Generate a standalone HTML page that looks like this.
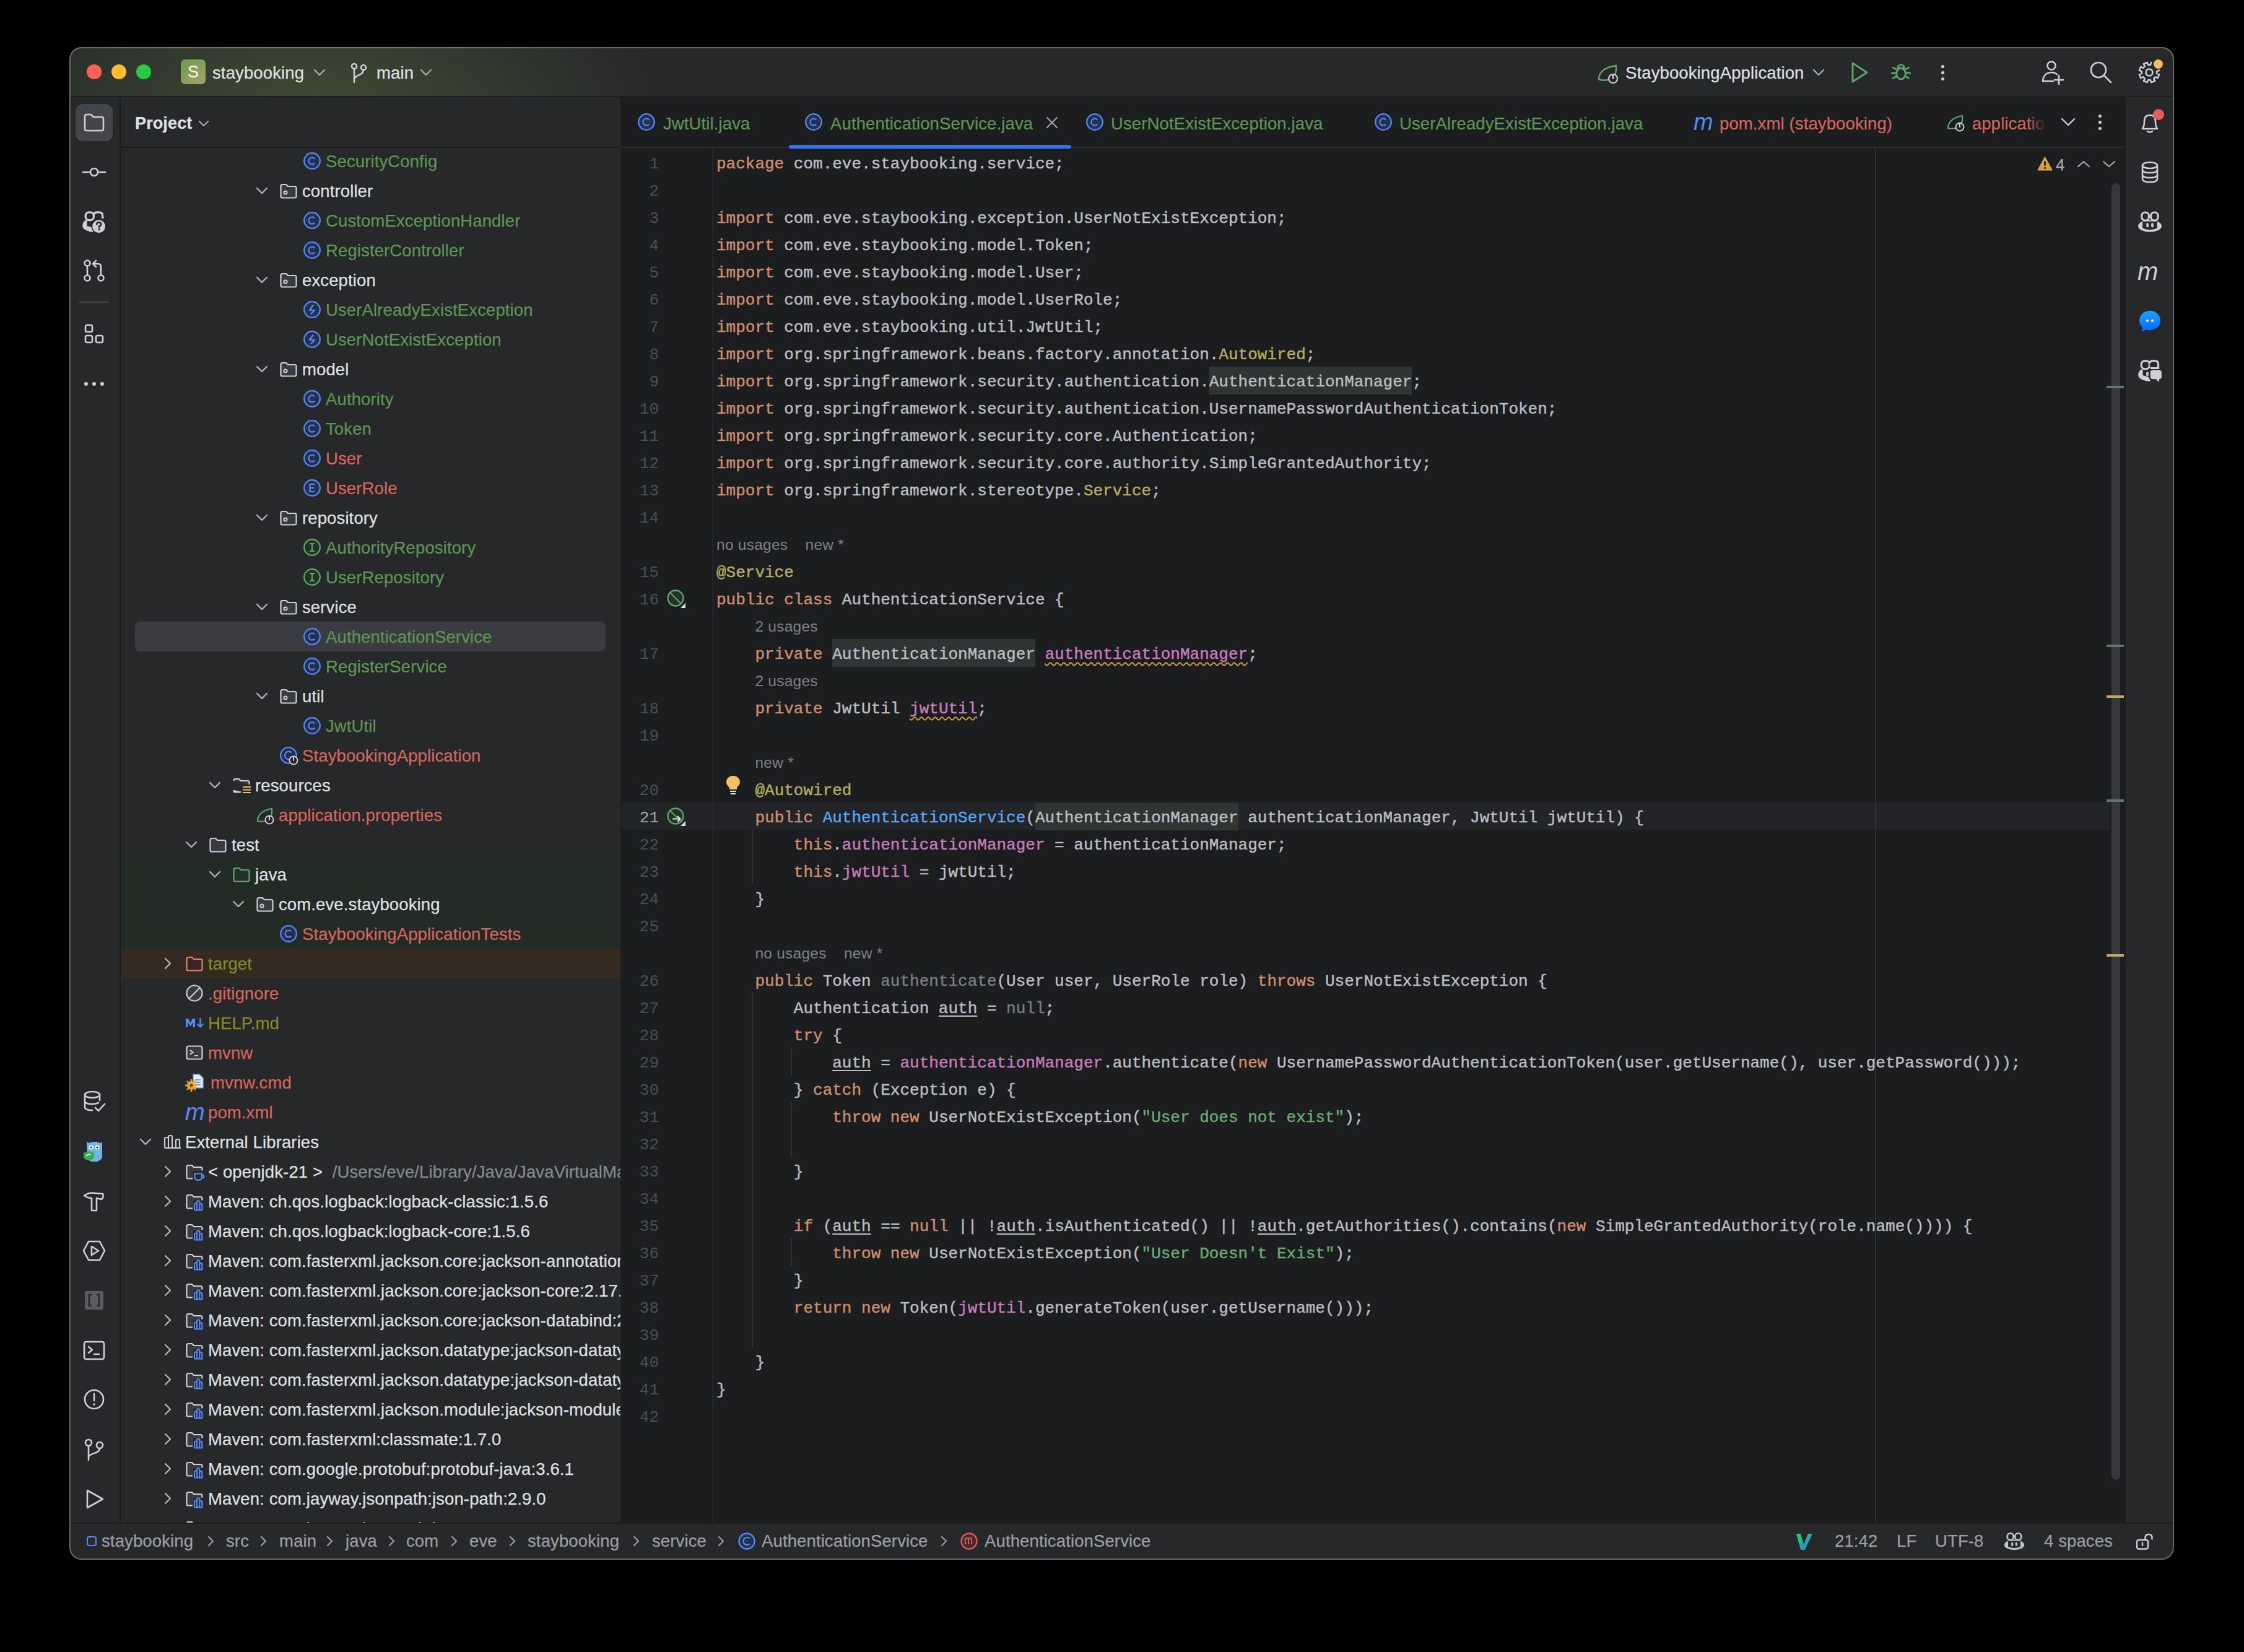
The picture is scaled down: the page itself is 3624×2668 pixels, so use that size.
<!DOCTYPE html><html><head><meta charset="utf-8"><style>
html,body{margin:0;padding:0;background:#000;}
body{width:3624px;height:2668px;overflow:hidden;position:relative;font-family:"Liberation Sans",sans-serif;}
#win{position:absolute;left:0;top:0;width:3624px;height:2668px;clip-path:inset(76px 113px 149px 112px round 20px);background:#27282A;}
.ui{font-family:"Liberation Sans",sans-serif;font-size:27.5px;letter-spacing:0.12px;color:#DFE1E5;-webkit-text-stroke:0.25px currentColor;}
.mono{font-family:"Liberation Mono",monospace;font-size:26px;color:#BCBEC4;}
.ln{position:absolute;left:1002px;width:62px;text-align:right;height:44px;line-height:44px;font-family:"Liberation Mono",monospace;font-size:26px;color:#4A4F57;}
.cr{position:absolute;left:1157px;height:44px;line-height:44px;white-space:pre;font-family:"Liberation Mono",monospace;font-size:26px;color:#BCBEC4;-webkit-text-stroke:0.45px currentColor;}
.k{color:#CF8E6D} .s{color:#6AAB73} .a{color:#B3AE60} .f{color:#C77DBB} .m{color:#56A8F5} .g{color:#7A7E85}
.hint{position:absolute;height:44px;line-height:44px;white-space:pre;font-family:"Liberation Sans",sans-serif;font-size:24.5px;letter-spacing:0.25px;color:#7E8189;}
.ul{text-decoration:underline;text-underline-offset:4px;text-decoration-thickness:2px;}
.wv{text-decoration:underline wavy #D9A343;text-underline-offset:5px;text-decoration-thickness:1.5px;}
.hl{background:#303433;padding:10px 0 5px 0;}
</style></head><body>
<div id="win">
<div style="position:absolute;left:112px;top:76px;width:3399px;height:80px;background:radial-gradient(ellipse 600px 300px at 400px 116px, rgba(96,124,62,0.44) 0%, rgba(96,124,62,0.24) 45%, rgba(96,124,62,0.07) 78%, rgba(96,124,62,0) 100%),#27282A;"></div>
<div style="position:absolute;left:112px;top:155px;width:3399px;height:2px;background:#1C1D1F;"></div>
<div style="position:absolute;left:140px;top:104px;width:24px;height:24px;border-radius:50%;background:#FF5F57;"></div>
<div style="position:absolute;left:180px;top:104px;width:24px;height:24px;border-radius:50%;background:#FEBC2E;"></div>
<div style="position:absolute;left:220px;top:104px;width:24px;height:24px;border-radius:50%;background:#28C840;"></div>
<div style="position:absolute;left:292px;top:96px;width:40px;height:40px;border-radius:7px;background:linear-gradient(135deg,#6E9A4C,#A6A367);"></div>
<div class="ui" style="position:absolute;left:292px;top:96px;height:40px;line-height:40px;white-space:pre;width:40px;text-align:center;color:#F4F4EC;font-size:27px;">S</div>
<div class="ui" style="position:absolute;left:343px;top:98px;height:40px;line-height:40px;white-space:pre;">staybooking</div>
<svg style="position:absolute;left:506.0px;top:111.0px;" width="20" height="12.0" viewBox="0 0 20 12.0"><path d="M2 2 L10.0 10.0 L18 2" fill="none" stroke="#A8ABB0" stroke-width="2.4" stroke-linecap="round" stroke-linejoin="round"/></svg>
<svg style="position:absolute;left:566px;top:100px;" width="28" height="36" viewBox="0 0 28 36"><circle cx="6" cy="7" r="4" fill="none" stroke="#CED0D6" stroke-width="2.6" stroke-linecap="round" stroke-linejoin="round"/><circle cx="21" cy="9" r="4" fill="none" stroke="#CED0D6" stroke-width="2.6" stroke-linecap="round" stroke-linejoin="round"/><path d="M6 11 V33 M21 13 C21 22 8 20 6 28" fill="none" stroke="#CED0D6" stroke-width="2.6" stroke-linecap="round" stroke-linejoin="round"/></svg>
<div class="ui" style="position:absolute;left:608px;top:98px;height:40px;line-height:40px;white-space:pre;">main</div>
<svg style="position:absolute;left:678.0px;top:111.0px;" width="20" height="12.0" viewBox="0 0 20 12.0"><path d="M2 2 L10.0 10.0 L18 2" fill="none" stroke="#A8ABB0" stroke-width="2.4" stroke-linecap="round" stroke-linejoin="round"/></svg>
<svg style="position:absolute;left:2578px;top:98px;" width="40" height="40" viewBox="0 0 40 40"><path d="M4 30 C4 16 18 10 32 8 C33 18 30 28 18 31 C12 32 7 32 4 30 Z" fill="none" stroke="#5FA86A" stroke-width="2.4"/><circle cx="27" cy="29" r="7" fill="#27282A" stroke="#CED0D6" stroke-width="2.2"/><path d="M27 23 V29" fill="none" stroke="#CED0D6" stroke-width="2.2" stroke-linecap="round" stroke-linejoin="round"/></svg>
<div class="ui" style="position:absolute;left:2625px;top:98px;height:40px;line-height:40px;white-space:pre;">StaybookingApplication</div>
<svg style="position:absolute;left:2927.0px;top:111.0px;" width="20" height="12.0" viewBox="0 0 20 12.0"><path d="M2 2 L10.0 10.0 L18 2" fill="none" stroke="#A8ABB0" stroke-width="2.4" stroke-linecap="round" stroke-linejoin="round"/></svg>
<svg style="position:absolute;left:2986px;top:98px;" width="34" height="38" viewBox="0 0 34 38"><path d="M6 4 L29 19 L6 34 Z" fill="none" stroke="#57A664" stroke-width="3" stroke-linejoin="round"/></svg>
<svg style="position:absolute;left:3050px;top:98px;" width="40" height="40" viewBox="0 0 40 40"><ellipse cx="20" cy="21" rx="7.3" ry="8.8" fill="none" stroke="#57A664" stroke-width="2.9"/><path d="M14.8 11.8 A5.2 5.2 0 0 1 25.2 11.8 Z M7.4 11.2 L12.2 13.8 M5.3 20 H12 M7.4 28.3 L12.2 25.6 M32.6 11.2 L27.8 13.8 M34.7 20 H28 M32.6 28.3 L27.8 25.6" fill="none" stroke="#57A664" stroke-width="2.9" stroke-linecap="round" stroke-linejoin="round"/></svg>
<div style="position:absolute;left:3135px;top:104.5px;width:5px;height:5.0px;border-radius:50%;background:#CED0D6;"></div>
<div style="position:absolute;left:3135px;top:114.5px;width:5px;height:5.0px;border-radius:50%;background:#CED0D6;"></div>
<div style="position:absolute;left:3135px;top:124.5px;width:5px;height:5.0px;border-radius:50%;background:#CED0D6;"></div>
<svg style="position:absolute;left:3294px;top:96px;" width="42" height="42" viewBox="0 0 42 42"><circle cx="19" cy="10" r="6.5" fill="none" stroke="#CED0D6" stroke-width="2.6" stroke-linecap="round" stroke-linejoin="round"/><path d="M5 35 C6 25 12 21 19 21 C23 21 26 22 28 24 M5 35 H22 M31 26 V40 M24 33 H38" fill="none" stroke="#CED0D6" stroke-width="2.6" stroke-linecap="round" stroke-linejoin="round"/></svg>
<svg style="position:absolute;left:3372px;top:96px;" width="42" height="42" viewBox="0 0 42 42"><circle cx="17" cy="17" r="12" fill="none" stroke="#CED0D6" stroke-width="2.6" stroke-linecap="round" stroke-linejoin="round"/><path d="M26 26 L37 37" fill="none" stroke="#CED0D6" stroke-width="2.6" stroke-linecap="round" stroke-linejoin="round"/></svg>
<svg style="position:absolute;left:3451px;top:97px;" width="40" height="40" viewBox="0 0 40 40"><path d="M23.29 3.83 L29.11 6.24 L27.23 10.05 L29.95 12.77 L33.76 10.89 L36.17 16.71 L32.15 18.08 L32.15 21.92 L36.17 23.29 L33.76 29.11 L29.95 27.23 L27.23 29.95 L29.11 33.76 L23.29 36.17 L21.92 32.15 L18.08 32.15 L16.71 36.17 L10.89 33.76 L12.77 29.95 L10.05 27.23 L6.24 29.11 L3.83 23.29 L7.85 21.92 L7.85 18.08 L3.83 16.71 L6.24 10.89 L10.05 12.77 L12.77 10.05 L10.89 6.24 L16.71 3.83 L18.08 7.85 L21.92 7.85 Z" fill="none" stroke="#CED0D6" stroke-width="2.5" stroke-linejoin="round"/><circle cx="20" cy="20" r="5.5" fill="none" stroke="#CED0D6" stroke-width="2.5"/></svg>
<div style="position:absolute;left:3475px;top:93px;width:20px;height:20px;border-radius:50%;background:#27282A;"></div>
<div style="position:absolute;left:3477.5px;top:95.5px;width:15.0px;height:15.0px;border-radius:50%;background:#F2BE5C;"></div>
<div style="position:absolute;left:193px;top:157px;width:2px;height:2303px;background:#1C1D1F;"></div>
<div style="position:absolute;left:122px;top:168px;width:60px;height:60px;border-radius:12px;background:#43454A;"></div>
<svg style="position:absolute;left:132.0px;top:178.0px;" width="40" height="40" viewBox="0 0 40 40"><path d="M5 10 Q5 7 8 7 H15 L19 11 H32 Q35 11 35 14 V30 Q35 33 32 33 H8 Q5 33 5 30 Z" fill="none" stroke="#CED0D6" stroke-width="2.6" stroke-linecap="round" stroke-linejoin="round"/></svg>
<svg style="position:absolute;left:132.0px;top:258.0px;" width="40" height="40" viewBox="0 0 40 40"><circle cx="20" cy="20" r="6" fill="none" stroke="#CED0D6" stroke-width="2.6" stroke-linecap="round" stroke-linejoin="round"/><path d="M2 20 H14 M26 20 H38" fill="none" stroke="#CED0D6" stroke-width="2.6" stroke-linecap="round" stroke-linejoin="round"/></svg>
<svg style="position:absolute;left:132.0px;top:337.0px;" width="40" height="40" viewBox="0 0 40 40"><path d="M8.5 18 C2 19 -1 28 3 32 C7 36 14 37.5 19 38 L16 30 L8.5 28 Z" fill="#CED0D6"/><path d="M8.5 19 V29 L17 32" fill="none" stroke="#CED0D6" stroke-width="0"/><rect x="6.2" y="5.8" width="13.2" height="12.8" rx="5.5" fill="#27282A" stroke="#CED0D6" stroke-width="3.2"/><path d="M19.4 10 Q19.4 5.8 25 5.8 H28 Q33.8 5.8 33.8 11.5 V16" fill="none" stroke="#CED0D6" stroke-width="3.2"/><circle cx="27.6" cy="28.7" r="12" fill="#27282A"/><circle cx="27.6" cy="28.7" r="10.4" fill="#CED0D6"/><path d="M24.2 25.2 Q24.5 22 27.8 22 Q31.2 22 31.2 25 Q31.2 27.2 28.2 28.4 V30" fill="none" stroke="#27282A" stroke-width="2.6" stroke-linecap="round"/><circle cx="28" cy="33.5" r="1.7" fill="#27282A"/></svg>
<svg style="position:absolute;left:132.0px;top:417.0px;" width="40" height="40" viewBox="0 0 40 40"><circle cx="9" cy="8" r="4.5" fill="none" stroke="#CED0D6" stroke-width="2.6" stroke-linecap="round" stroke-linejoin="round"/><circle cx="9" cy="32" r="4.5" fill="none" stroke="#CED0D6" stroke-width="2.6" stroke-linecap="round" stroke-linejoin="round"/><circle cx="31" cy="32" r="4.5" fill="none" stroke="#CED0D6" stroke-width="2.6" stroke-linecap="round" stroke-linejoin="round"/><path d="M9 12.5 V27.5 M31 27.5 V14 Q31 9 26 9 H19 M23 4 L18 9 L23 14" fill="none" stroke="#CED0D6" stroke-width="2.6" stroke-linecap="round" stroke-linejoin="round"/></svg>
<div style="position:absolute;left:128px;top:487px;width:48px;height:2px;background:#43454A;"></div>
<svg style="position:absolute;left:132.0px;top:520.0px;" width="40" height="40" viewBox="0 0 40 40"><rect x="6" y="5" width="11" height="11" rx="2.5" fill="none" stroke="#CED0D6" stroke-width="2.6" stroke-linecap="round" stroke-linejoin="round"/><rect x="6" y="22" width="11" height="11" rx="2.5" fill="none" stroke="#CED0D6" stroke-width="2.6" stroke-linecap="round" stroke-linejoin="round"/><rect x="23" y="22" width="11" height="11" rx="2.5" fill="none" stroke="#CED0D6" stroke-width="2.6" stroke-linecap="round" stroke-linejoin="round"/></svg>
<div style="position:absolute;left:136px;top:617px;width:6px;height:6px;border-radius:50%;background:#CED0D6;"></div>
<div style="position:absolute;left:149px;top:617px;width:6px;height:6px;border-radius:50%;background:#CED0D6;"></div>
<div style="position:absolute;left:162px;top:617px;width:6px;height:6px;border-radius:50%;background:#CED0D6;"></div>
<svg style="position:absolute;left:132.0px;top:1759.0px;" width="40" height="40" viewBox="0 0 40 40"><ellipse cx="17" cy="9" rx="12" ry="5" fill="none" stroke="#CED0D6" stroke-width="2.6" stroke-linecap="round" stroke-linejoin="round"/><path d="M5 9 V29 Q5 34 17 34 M29 9 V18 M5 19 Q5 24 17 24 Q23 24 27 22" fill="none" stroke="#CED0D6" stroke-width="2.6" stroke-linecap="round" stroke-linejoin="round"/><path d="M22 30 L27 35 L37 24" fill="none" stroke="#CED0D6" stroke-width="2.6" stroke-linecap="round" stroke-linejoin="round"/></svg>
<svg style="position:absolute;left:132.0px;top:1840.0px;" width="40" height="40" viewBox="0 0 40 40"><path d="M12 6 Q20 2 30 6 L33 4 L33 30 Q28 37 20 36 Q12 37 9 30 L8 4 Z" fill="#6FB5E8"/><circle cx="15" cy="13" r="3.5" fill="#fff"/><circle cx="25" cy="13" r="3.5" fill="#fff"/><circle cx="15" cy="13" r="1.5" fill="#222"/><circle cx="25" cy="13" r="1.5" fill="#222"/><path d="M3 22 L12 19 L20 22 V30 Q12 38 3 30 Z" fill="#2FAE55"/><path d="M7 27 L11 24 L15 25" stroke="#fff" stroke-width="1.6" fill="none"/></svg>
<svg style="position:absolute;left:132.0px;top:1921.0px;" width="40" height="40" viewBox="0 0 40 40"><path d="M4 10 Q12 4 22 6 L34 7 Q36 12 32 16 L24 14 V34 H16 V14 Q10 14 4 10 Z" fill="none" stroke="#CED0D6" stroke-width="2.6" stroke-linecap="round" stroke-linejoin="round"/></svg>
<svg style="position:absolute;left:132.0px;top:2000.0px;" width="40" height="40" viewBox="0 0 40 40"><path d="M11 5 H29 L37 20 L29 35 H11 L3 20 Z" fill="none" stroke="#CED0D6" stroke-width="2.6" stroke-linecap="round" stroke-linejoin="round"/><path d="M16 13 L27 20 L16 27 Z" fill="none" stroke="#CED0D6" stroke-width="2.6" stroke-linecap="round" stroke-linejoin="round"/></svg>
<svg style="position:absolute;left:132.0px;top:2080.0px;" width="40" height="40" viewBox="0 0 40 40"><rect x="5" y="5" width="30" height="30" rx="3" fill="#5A5C60"/><path d="M16 11 H12 V29 H16 M24 11 H28 V29 H24" fill="none" stroke="#2B2D30" stroke-width="3"/></svg>
<svg style="position:absolute;left:132.0px;top:2161.0px;" width="40" height="40" viewBox="0 0 40 40"><rect x="4" y="6" width="32" height="28" rx="3" fill="none" stroke="#CED0D6" stroke-width="2.6" stroke-linecap="round" stroke-linejoin="round"/><path d="M11 14 L17 19 L11 24 M20 26 H28" fill="none" stroke="#CED0D6" stroke-width="2.6" stroke-linecap="round" stroke-linejoin="round"/></svg>
<svg style="position:absolute;left:132.0px;top:2240.0px;" width="40" height="40" viewBox="0 0 40 40"><circle cx="20" cy="20" r="15" fill="none" stroke="#CED0D6" stroke-width="2.6" stroke-linecap="round" stroke-linejoin="round"/><path d="M20 11 V22" fill="none" stroke="#CED0D6" stroke-width="2.6" stroke-linecap="round" stroke-linejoin="round"/><circle cx="20" cy="28" r="1.8" fill="#CED0D6"/></svg>
<svg style="position:absolute;left:132.0px;top:2321.0px;" width="40" height="40" viewBox="0 0 40 40"><circle cx="11" cy="9" r="5" fill="none" stroke="#CED0D6" stroke-width="2.6" stroke-linecap="round" stroke-linejoin="round"/><circle cx="29" cy="13" r="5" fill="none" stroke="#CED0D6" stroke-width="2.6" stroke-linecap="round" stroke-linejoin="round"/><path d="M11 14 V37 M29 18 C29 27 13 25 11 32" fill="none" stroke="#CED0D6" stroke-width="2.6" stroke-linecap="round" stroke-linejoin="round"/></svg>
<svg style="position:absolute;left:132.0px;top:2401.0px;" width="40" height="40" viewBox="0 0 40 40"><path d="M9 6 L34 20 L9 34 Z" fill="none" stroke="#CED0D6" stroke-width="2.6" stroke-linecap="round" stroke-linejoin="round"/></svg>
<div style="position:absolute;left:3431px;top:157px;width:2px;height:2303px;background:#1C1D1F;"></div>
<svg style="position:absolute;left:3452.0px;top:178.0px;" width="40" height="40" viewBox="0 0 40 40"><path d="M8 30 Q11 26 11 18 Q11 8 20 8 Q29 8 29 18 Q29 26 32 30 Z M16 34 Q20 37 24 34" fill="none" stroke="#CED0D6" stroke-width="2.6" stroke-linecap="round" stroke-linejoin="round"/></svg>
<div style="position:absolute;left:3477px;top:176px;width:18px;height:18px;border-radius:50%;background:#E55B5B;"></div>
<svg style="position:absolute;left:3452.0px;top:258.0px;" width="40" height="40" viewBox="0 0 40 40"><ellipse cx="20" cy="9" rx="12" ry="5" fill="none" stroke="#CED0D6" stroke-width="2.6" stroke-linecap="round" stroke-linejoin="round"/><path d="M8 9 V31 Q8 36 20 36 Q32 36 32 31 V9 M8 16 Q8 21 20 21 Q32 21 32 16 M8 24 Q8 29 20 29 Q32 29 32 24" fill="none" stroke="#CED0D6" stroke-width="2.6" stroke-linecap="round" stroke-linejoin="round"/></svg>
<svg style="position:absolute;left:3452.0px;top:338.0px;" width="40" height="40" viewBox="0 0 40 40"><ellipse cx="20" cy="27" rx="19" ry="9.6" fill="#CED0D6"/><path d="M8.2 19.5 H31.8 V30.5 Q20 35.5 8.2 30.5 Z" fill="#27282A"/><rect x="6.8" y="5" width="11.6" height="13" rx="5.5" fill="#27282A" stroke="#CED0D6" stroke-width="3.2"/><rect x="21.6" y="5" width="11.6" height="13" rx="5.5" fill="#27282A" stroke="#CED0D6" stroke-width="3.2"/><rect x="14.3" y="22" width="3.6" height="7.4" rx="1.8" fill="#CED0D6"/><rect x="22.2" y="22" width="3.6" height="7.4" rx="1.8" fill="#CED0D6"/></svg>
<div style="position:absolute;left:3452px;top:418px;height:40px;line-height:40px;white-space:pre;font-style:italic;font-size:40px;color:#CED0D6;font-family:'Liberation Sans';letter-spacing:-1px;">m</div>
<svg style="position:absolute;left:3452.0px;top:498.0px;" width="40" height="40" viewBox="0 0 40 40"><defs><linearGradient id="msg" x1="0" y1="1" x2="0" y2="0"><stop offset="0" stop-color="#0866FF"/><stop offset="1" stop-color="#1AA3FF"/></linearGradient></defs><path d="M20 4 C30 4 37 11 37 20 C37 29 30 35 20 35 C18 35 16 35 14 34 L7 38 L8 31 C5 28 3 24 3 20 C3 11 10 4 20 4 Z" fill="url(#msg)"/><circle cx="16" cy="20" r="2" fill="#fff"/><circle cx="24" cy="20" r="2" fill="#fff"/></svg>
<svg style="position:absolute;left:3452.0px;top:578.0px;" width="40" height="40" viewBox="0 0 40 40"><path d="M8.5 18 C2 19 -1 28 3 32 C7 36 14 37.5 21 38 L18 31 L8.5 28 Z" fill="#CED0D6"/><rect x="6.2" y="4.8" width="13.2" height="13" rx="5.5" fill="#27282A" stroke="#CED0D6" stroke-width="3.2"/><path d="M19.4 9 Q19.4 4.8 25 4.8 H28 Q33.6 4.8 33.6 10.5 V16.5 H21" fill="#27282A" stroke="#CED0D6" stroke-width="3.2"/><rect x="14.2" y="22.3" width="3.6" height="7.3" rx="1.8" fill="#CED0D6"/><rect x="19.2" y="18.3" width="21.2" height="17.5" rx="5" fill="#27282A"/><rect x="20.7" y="19.8" width="18.2" height="14.5" rx="3.8" fill="#CED0D6"/><path d="M29.5 34 L35 39.2 V34 Z" fill="#CED0D6"/></svg>
<div style="position:absolute;left:112px;top:2459px;width:3399px;height:2px;background:#1C1D1F;"></div>
<div style="position:absolute;left:112px;top:2461px;width:3399px;height:58px;background:#27282A;"></div>
<div style="position:absolute;left:140px;top:2481px;width:16px;height:16px;border:2.4px solid #548AF7;border-radius:4px;box-sizing:border-box;"></div>
<div class="ui" style="position:absolute;left:164px;top:2469px;height:40px;line-height:40px;white-space:pre;color:#9C9FA6;">staybooking</div>
<div class="ui" style="position:absolute;left:365px;top:2469px;height:40px;line-height:40px;white-space:pre;color:#9C9FA6;">src</div>
<div class="ui" style="position:absolute;left:451px;top:2469px;height:40px;line-height:40px;white-space:pre;color:#9C9FA6;">main</div>
<div class="ui" style="position:absolute;left:558px;top:2469px;height:40px;line-height:40px;white-space:pre;color:#9C9FA6;">java</div>
<div class="ui" style="position:absolute;left:656px;top:2469px;height:40px;line-height:40px;white-space:pre;color:#9C9FA6;">com</div>
<div class="ui" style="position:absolute;left:758px;top:2469px;height:40px;line-height:40px;white-space:pre;color:#9C9FA6;">eve</div>
<div class="ui" style="position:absolute;left:852px;top:2469px;height:40px;line-height:40px;white-space:pre;color:#9C9FA6;">staybooking</div>
<div class="ui" style="position:absolute;left:1053px;top:2469px;height:40px;line-height:40px;white-space:pre;color:#9C9FA6;">service</div>
<svg style="position:absolute;left:334.5px;top:2480.0px;" width="11.0" height="18" viewBox="0 0 11.0 18"><path d="M2 2 L9.0 9.0 L2 16" fill="none" stroke="#9C9FA6" stroke-width="2.2" stroke-linecap="round" stroke-linejoin="round"/></svg>
<svg style="position:absolute;left:419.5px;top:2480.0px;" width="11.0" height="18" viewBox="0 0 11.0 18"><path d="M2 2 L9.0 9.0 L2 16" fill="none" stroke="#9C9FA6" stroke-width="2.2" stroke-linecap="round" stroke-linejoin="round"/></svg>
<svg style="position:absolute;left:526.5px;top:2480.0px;" width="11.0" height="18" viewBox="0 0 11.0 18"><path d="M2 2 L9.0 9.0 L2 16" fill="none" stroke="#9C9FA6" stroke-width="2.2" stroke-linecap="round" stroke-linejoin="round"/></svg>
<svg style="position:absolute;left:626.5px;top:2480.0px;" width="11.0" height="18" viewBox="0 0 11.0 18"><path d="M2 2 L9.0 9.0 L2 16" fill="none" stroke="#9C9FA6" stroke-width="2.2" stroke-linecap="round" stroke-linejoin="round"/></svg>
<svg style="position:absolute;left:727.5px;top:2480.0px;" width="11.0" height="18" viewBox="0 0 11.0 18"><path d="M2 2 L9.0 9.0 L2 16" fill="none" stroke="#9C9FA6" stroke-width="2.2" stroke-linecap="round" stroke-linejoin="round"/></svg>
<svg style="position:absolute;left:821.5px;top:2480.0px;" width="11.0" height="18" viewBox="0 0 11.0 18"><path d="M2 2 L9.0 9.0 L2 16" fill="none" stroke="#9C9FA6" stroke-width="2.2" stroke-linecap="round" stroke-linejoin="round"/></svg>
<svg style="position:absolute;left:1021.5px;top:2480.0px;" width="11.0" height="18" viewBox="0 0 11.0 18"><path d="M2 2 L9.0 9.0 L2 16" fill="none" stroke="#9C9FA6" stroke-width="2.2" stroke-linecap="round" stroke-linejoin="round"/></svg>
<svg style="position:absolute;left:1158.5px;top:2480.0px;" width="11.0" height="18" viewBox="0 0 11.0 18"><path d="M2 2 L9.0 9.0 L2 16" fill="none" stroke="#9C9FA6" stroke-width="2.2" stroke-linecap="round" stroke-linejoin="round"/></svg>
<svg style="position:absolute;left:1518.5px;top:2480.0px;" width="11.0" height="18" viewBox="0 0 11.0 18"><path d="M2 2 L9.0 9.0 L2 16" fill="none" stroke="#9C9FA6" stroke-width="2.2" stroke-linecap="round" stroke-linejoin="round"/></svg>
<svg style="position:absolute;left:1191px;top:2474px;" width="30" height="30" viewBox="0 0 30 30"><circle cx="15" cy="15" r="12.5" fill="#25324D" stroke="#548AF7" stroke-width="2.4"/><path d="M19.5 10.5 A6 6 0 1 0 19.5 19.5" fill="none" stroke="#548AF7" stroke-width="2.2"/></svg>
<div class="ui" style="position:absolute;left:1230px;top:2469px;height:40px;line-height:40px;white-space:pre;color:#9C9FA6;">AuthenticationService</div>
<svg style="position:absolute;left:1550px;top:2474px;" width="30" height="30" viewBox="0 0 30 30"><circle cx="15" cy="15" r="12.5" fill="#4A2A2C" stroke="#DB5C5C" stroke-width="2.4"/><path d="M9 20 V12 Q9 10 11.5 10 Q14 10 14 12 V20 M14 12 Q14 10 16.5 10 Q19 10 19 12 V20" fill="none" stroke="#DB5C5C" stroke-width="2"/></svg>
<div class="ui" style="position:absolute;left:1590px;top:2469px;height:40px;line-height:40px;white-space:pre;color:#9C9FA6;">AuthenticationService</div>
<svg style="position:absolute;left:2900px;top:2476px;" width="28" height="28" viewBox="0 0 28 28"><defs><linearGradient id="vg" x1="0" y1="0" x2="1" y2="1"><stop offset="0" stop-color="#1FD65A"/><stop offset="1" stop-color="#2A7BF0"/></linearGradient></defs><path d="M1 1 H8 L13 18 L20 1 H27 L15 27 H8 Z" fill="url(#vg)"/></svg>
<div class="ui" style="position:absolute;left:2963px;top:2469px;height:40px;line-height:40px;white-space:pre;color:#9C9FA6;">21:42</div>
<div class="ui" style="position:absolute;left:3063px;top:2469px;height:40px;line-height:40px;white-space:pre;color:#9C9FA6;">LF</div>
<div class="ui" style="position:absolute;left:3125px;top:2469px;height:40px;line-height:40px;white-space:pre;color:#9C9FA6;">UTF-8</div>
<div class="ui" style="position:absolute;left:3301px;top:2469px;height:40px;line-height:40px;white-space:pre;color:#9C9FA6;">4 spaces</div>
<svg style="position:absolute;left:3236px;top:2472px;" width="34" height="34" viewBox="0 0 40 40"><ellipse cx="20" cy="27" rx="19" ry="9.6" fill="#BFC2C8"/><path d="M8.2 19.5 H31.8 V30.5 Q20 35.5 8.2 30.5 Z" fill="#27282A"/><rect x="6.8" y="5" width="11.6" height="13" rx="5.5" fill="#27282A" stroke="#BFC2C8" stroke-width="3.2"/><rect x="21.6" y="5" width="11.6" height="13" rx="5.5" fill="#27282A" stroke="#BFC2C8" stroke-width="3.2"/><rect x="14.3" y="22" width="3.6" height="7.4" rx="1.8" fill="#BFC2C8"/><rect x="22.2" y="22" width="3.6" height="7.4" rx="1.8" fill="#BFC2C8"/></svg>
<svg style="position:absolute;left:3448px;top:2474px;" width="32" height="32" viewBox="0 0 32 32"><rect x="3" y="13" width="18" height="14.5" rx="3" fill="none" stroke="#CED0D6" stroke-width="2.4" stroke-linecap="round" stroke-linejoin="round"/><path d="M12 17.5 V22" fill="none" stroke="#CED0D6" stroke-width="2.4" stroke-linecap="round" stroke-linejoin="round"/><path d="M16.5 13 V9.5 Q16.5 4 22 4 Q27.5 4 27.5 9.5 V11.5" fill="none" stroke="#CED0D6" stroke-width="2.4" stroke-linecap="round" stroke-linejoin="round"/></svg>
<div style="position:absolute;left:195px;top:157px;width:807px;height:80px;background:#27282A;"></div>
<div class="ui" style="position:absolute;left:218px;top:179px;height:40px;line-height:40px;white-space:pre;font-weight:bold;font-size:27px;">Project</div>
<svg style="position:absolute;left:320.0px;top:193.5px;" width="18" height="11.0" viewBox="0 0 18 11.0"><path d="M2 2 L9.0 9.0 L16 2" fill="none" stroke="#A8ABB0" stroke-width="2.2" stroke-linecap="round" stroke-linejoin="round"/></svg>
<div style="position:absolute;left:195px;top:237px;width:807px;height:2px;background:#1C1D1F;"></div>
<div style="position:absolute;left:195px;top:239px;width:807px;height:2220px;overflow:hidden;">
<div style="position:absolute;left:0px;top:1149px;width:807px;height:144px;background:#222B25;"></div>
<div style="position:absolute;left:0px;top:1293px;width:807px;height:48px;background:#342A22;"></div>
<div style="position:absolute;left:23px;top:765px;width:760px;height:48px;border-radius:8px;background:#3A3C41;"></div>
<svg style="position:absolute;left:294px;top:6px;" width="30" height="30" viewBox="0 0 30 30"><circle cx="15" cy="15" r="12.8" fill="#25324D" stroke="#548AF7" stroke-width="2.3"/><path d="M19.2 11.2 A5.6 5.6 0 1 0 19.2 18.8" fill="none" stroke="#548AF7" stroke-width="2"/></svg>
<div class="ui" style="position:absolute;left:331px;top:2px;height:40px;line-height:40px;white-space:pre;color:#5B9652;">SecurityConfig</div>
<svg style="position:absolute;left:218.0px;top:63.0px;" width="20" height="12.0" viewBox="0 0 20 12.0"><path d="M2 2 L10.0 10.0 L18 2" fill="none" stroke="#B4B8BF" stroke-width="2.3" stroke-linecap="round" stroke-linejoin="round"/></svg>
<svg style="position:absolute;left:256px;top:54px;" width="30" height="30" viewBox="0 0 30 30"><path d="M2.5 8 Q2.5 5 5 5 H11 L14 8 H25 Q27.5 8 27.5 10.5 V24 Q27.5 26.5 25 26.5 H5 Q2.5 26.5 2.5 24 Z" fill="#393B40" stroke="#CED0D6" stroke-width="2.2"/><circle cx="10" cy="18" r="2.6" fill="none" stroke="#CED0D6" stroke-width="2"/></svg>
<div class="ui" style="position:absolute;left:293px;top:50px;height:40px;line-height:40px;white-space:pre;">controller</div>
<svg style="position:absolute;left:294px;top:102px;" width="30" height="30" viewBox="0 0 30 30"><circle cx="15" cy="15" r="12.8" fill="#25324D" stroke="#548AF7" stroke-width="2.3"/><path d="M19.2 11.2 A5.6 5.6 0 1 0 19.2 18.8" fill="none" stroke="#548AF7" stroke-width="2"/></svg>
<div class="ui" style="position:absolute;left:331px;top:98px;height:40px;line-height:40px;white-space:pre;color:#5B9652;">CustomExceptionHandler</div>
<svg style="position:absolute;left:294px;top:150px;" width="30" height="30" viewBox="0 0 30 30"><circle cx="15" cy="15" r="12.8" fill="#25324D" stroke="#548AF7" stroke-width="2.3"/><path d="M19.2 11.2 A5.6 5.6 0 1 0 19.2 18.8" fill="none" stroke="#548AF7" stroke-width="2"/></svg>
<div class="ui" style="position:absolute;left:331px;top:146px;height:40px;line-height:40px;white-space:pre;color:#5B9652;">RegisterController</div>
<svg style="position:absolute;left:218.0px;top:207.0px;" width="20" height="12.0" viewBox="0 0 20 12.0"><path d="M2 2 L10.0 10.0 L18 2" fill="none" stroke="#B4B8BF" stroke-width="2.3" stroke-linecap="round" stroke-linejoin="round"/></svg>
<svg style="position:absolute;left:256px;top:198px;" width="30" height="30" viewBox="0 0 30 30"><path d="M2.5 8 Q2.5 5 5 5 H11 L14 8 H25 Q27.5 8 27.5 10.5 V24 Q27.5 26.5 25 26.5 H5 Q2.5 26.5 2.5 24 Z" fill="#393B40" stroke="#CED0D6" stroke-width="2.2"/><circle cx="10" cy="18" r="2.6" fill="none" stroke="#CED0D6" stroke-width="2"/></svg>
<div class="ui" style="position:absolute;left:293px;top:194px;height:40px;line-height:40px;white-space:pre;">exception</div>
<svg style="position:absolute;left:294px;top:246px;" width="30" height="30" viewBox="0 0 30 30"><circle cx="15" cy="15" r="12.8" fill="#25324D" stroke="#548AF7" stroke-width="2.3"/><path d="M17 7.5 L11 16 H19 L13 22.5" fill="none" stroke="#548AF7" stroke-width="2.2" stroke-linejoin="round"/></svg>
<div class="ui" style="position:absolute;left:331px;top:242px;height:40px;line-height:40px;white-space:pre;color:#5B9652;">UserAlreadyExistException</div>
<svg style="position:absolute;left:294px;top:294px;" width="30" height="30" viewBox="0 0 30 30"><circle cx="15" cy="15" r="12.8" fill="#25324D" stroke="#548AF7" stroke-width="2.3"/><path d="M17 7.5 L11 16 H19 L13 22.5" fill="none" stroke="#548AF7" stroke-width="2.2" stroke-linejoin="round"/></svg>
<div class="ui" style="position:absolute;left:331px;top:290px;height:40px;line-height:40px;white-space:pre;color:#5B9652;">UserNotExistException</div>
<svg style="position:absolute;left:218.0px;top:351.0px;" width="20" height="12.0" viewBox="0 0 20 12.0"><path d="M2 2 L10.0 10.0 L18 2" fill="none" stroke="#B4B8BF" stroke-width="2.3" stroke-linecap="round" stroke-linejoin="round"/></svg>
<svg style="position:absolute;left:256px;top:342px;" width="30" height="30" viewBox="0 0 30 30"><path d="M2.5 8 Q2.5 5 5 5 H11 L14 8 H25 Q27.5 8 27.5 10.5 V24 Q27.5 26.5 25 26.5 H5 Q2.5 26.5 2.5 24 Z" fill="#393B40" stroke="#CED0D6" stroke-width="2.2"/><circle cx="10" cy="18" r="2.6" fill="none" stroke="#CED0D6" stroke-width="2"/></svg>
<div class="ui" style="position:absolute;left:293px;top:338px;height:40px;line-height:40px;white-space:pre;">model</div>
<svg style="position:absolute;left:294px;top:390px;" width="30" height="30" viewBox="0 0 30 30"><circle cx="15" cy="15" r="12.8" fill="#25324D" stroke="#548AF7" stroke-width="2.3"/><path d="M19.2 11.2 A5.6 5.6 0 1 0 19.2 18.8" fill="none" stroke="#548AF7" stroke-width="2"/></svg>
<div class="ui" style="position:absolute;left:331px;top:386px;height:40px;line-height:40px;white-space:pre;color:#5B9652;">Authority</div>
<svg style="position:absolute;left:294px;top:438px;" width="30" height="30" viewBox="0 0 30 30"><circle cx="15" cy="15" r="12.8" fill="#25324D" stroke="#548AF7" stroke-width="2.3"/><path d="M19.2 11.2 A5.6 5.6 0 1 0 19.2 18.8" fill="none" stroke="#548AF7" stroke-width="2"/></svg>
<div class="ui" style="position:absolute;left:331px;top:434px;height:40px;line-height:40px;white-space:pre;color:#5B9652;">Token</div>
<svg style="position:absolute;left:294px;top:486px;" width="30" height="30" viewBox="0 0 30 30"><circle cx="15" cy="15" r="12.8" fill="#25324D" stroke="#548AF7" stroke-width="2.3"/><path d="M19.2 11.2 A5.6 5.6 0 1 0 19.2 18.8" fill="none" stroke="#548AF7" stroke-width="2"/></svg>
<div class="ui" style="position:absolute;left:331px;top:482px;height:40px;line-height:40px;white-space:pre;color:#D6665B;">User</div>
<svg style="position:absolute;left:294px;top:534px;" width="30" height="30" viewBox="0 0 30 30"><circle cx="15" cy="15" r="12.8" fill="#25324D" stroke="#548AF7" stroke-width="2.3"/><path d="M19 9 H11.5 V21 H19 M11.5 15 H18" fill="none" stroke="#548AF7" stroke-width="2.2"/></svg>
<div class="ui" style="position:absolute;left:331px;top:530px;height:40px;line-height:40px;white-space:pre;color:#D6665B;">UserRole</div>
<svg style="position:absolute;left:218.0px;top:591.0px;" width="20" height="12.0" viewBox="0 0 20 12.0"><path d="M2 2 L10.0 10.0 L18 2" fill="none" stroke="#B4B8BF" stroke-width="2.3" stroke-linecap="round" stroke-linejoin="round"/></svg>
<svg style="position:absolute;left:256px;top:582px;" width="30" height="30" viewBox="0 0 30 30"><path d="M2.5 8 Q2.5 5 5 5 H11 L14 8 H25 Q27.5 8 27.5 10.5 V24 Q27.5 26.5 25 26.5 H5 Q2.5 26.5 2.5 24 Z" fill="#393B40" stroke="#CED0D6" stroke-width="2.2"/><circle cx="10" cy="18" r="2.6" fill="none" stroke="#CED0D6" stroke-width="2"/></svg>
<div class="ui" style="position:absolute;left:293px;top:578px;height:40px;line-height:40px;white-space:pre;">repository</div>
<svg style="position:absolute;left:294px;top:630px;" width="30" height="30" viewBox="0 0 30 30"><circle cx="15" cy="15" r="12.8" fill="#233227" stroke="#5FA86A" stroke-width="2.3"/><path d="M11 9 H19 M11 21 H19 M15 9 V21" fill="none" stroke="#5FA86A" stroke-width="2.2"/></svg>
<div class="ui" style="position:absolute;left:331px;top:626px;height:40px;line-height:40px;white-space:pre;color:#5B9652;">AuthorityRepository</div>
<svg style="position:absolute;left:294px;top:678px;" width="30" height="30" viewBox="0 0 30 30"><circle cx="15" cy="15" r="12.8" fill="#233227" stroke="#5FA86A" stroke-width="2.3"/><path d="M11 9 H19 M11 21 H19 M15 9 V21" fill="none" stroke="#5FA86A" stroke-width="2.2"/></svg>
<div class="ui" style="position:absolute;left:331px;top:674px;height:40px;line-height:40px;white-space:pre;color:#5B9652;">UserRepository</div>
<svg style="position:absolute;left:218.0px;top:735.0px;" width="20" height="12.0" viewBox="0 0 20 12.0"><path d="M2 2 L10.0 10.0 L18 2" fill="none" stroke="#B4B8BF" stroke-width="2.3" stroke-linecap="round" stroke-linejoin="round"/></svg>
<svg style="position:absolute;left:256px;top:726px;" width="30" height="30" viewBox="0 0 30 30"><path d="M2.5 8 Q2.5 5 5 5 H11 L14 8 H25 Q27.5 8 27.5 10.5 V24 Q27.5 26.5 25 26.5 H5 Q2.5 26.5 2.5 24 Z" fill="#393B40" stroke="#CED0D6" stroke-width="2.2"/><circle cx="10" cy="18" r="2.6" fill="none" stroke="#CED0D6" stroke-width="2"/></svg>
<div class="ui" style="position:absolute;left:293px;top:722px;height:40px;line-height:40px;white-space:pre;">service</div>
<svg style="position:absolute;left:294px;top:774px;" width="30" height="30" viewBox="0 0 30 30"><circle cx="15" cy="15" r="12.8" fill="#25324D" stroke="#548AF7" stroke-width="2.3"/><path d="M19.2 11.2 A5.6 5.6 0 1 0 19.2 18.8" fill="none" stroke="#548AF7" stroke-width="2"/></svg>
<div class="ui" style="position:absolute;left:331px;top:770px;height:40px;line-height:40px;white-space:pre;color:#5B9652;">AuthenticationService</div>
<svg style="position:absolute;left:294px;top:822px;" width="30" height="30" viewBox="0 0 30 30"><circle cx="15" cy="15" r="12.8" fill="#25324D" stroke="#548AF7" stroke-width="2.3"/><path d="M19.2 11.2 A5.6 5.6 0 1 0 19.2 18.8" fill="none" stroke="#548AF7" stroke-width="2"/></svg>
<div class="ui" style="position:absolute;left:331px;top:818px;height:40px;line-height:40px;white-space:pre;color:#5B9652;">RegisterService</div>
<svg style="position:absolute;left:218.0px;top:879.0px;" width="20" height="12.0" viewBox="0 0 20 12.0"><path d="M2 2 L10.0 10.0 L18 2" fill="none" stroke="#B4B8BF" stroke-width="2.3" stroke-linecap="round" stroke-linejoin="round"/></svg>
<svg style="position:absolute;left:256px;top:870px;" width="30" height="30" viewBox="0 0 30 30"><path d="M2.5 8 Q2.5 5 5 5 H11 L14 8 H25 Q27.5 8 27.5 10.5 V24 Q27.5 26.5 25 26.5 H5 Q2.5 26.5 2.5 24 Z" fill="#393B40" stroke="#CED0D6" stroke-width="2.2"/><circle cx="10" cy="18" r="2.6" fill="none" stroke="#CED0D6" stroke-width="2"/></svg>
<div class="ui" style="position:absolute;left:293px;top:866px;height:40px;line-height:40px;white-space:pre;">util</div>
<svg style="position:absolute;left:294px;top:918px;" width="30" height="30" viewBox="0 0 30 30"><circle cx="15" cy="15" r="12.8" fill="#25324D" stroke="#548AF7" stroke-width="2.3"/><path d="M19.2 11.2 A5.6 5.6 0 1 0 19.2 18.8" fill="none" stroke="#548AF7" stroke-width="2"/></svg>
<div class="ui" style="position:absolute;left:331px;top:914px;height:40px;line-height:40px;white-space:pre;color:#5B9652;">JwtUtil</div>
<svg style="position:absolute;left:256px;top:966px;" width="32" height="32" viewBox="0 0 32 32"><circle cx="15" cy="15" r="12.8" fill="#25324D" stroke="#548AF7" stroke-width="2.3"/><path d="M19.8 10.6 A6.3 6.3 0 1 0 19.8 19.4" fill="none" stroke="#548AF7" stroke-width="2.2"/><circle cx="23" cy="23" r="6.5" fill="#27282A" stroke="#CED0D6" stroke-width="2"/><path d="M23 17.5 V23" stroke="#CED0D6" stroke-width="2" stroke-linecap="round"/></svg>
<div class="ui" style="position:absolute;left:293px;top:962px;height:40px;line-height:40px;white-space:pre;color:#D6665B;">StaybookingApplication</div>
<svg style="position:absolute;left:142.0px;top:1023.0px;" width="20" height="12.0" viewBox="0 0 20 12.0"><path d="M2 2 L10.0 10.0 L18 2" fill="none" stroke="#B4B8BF" stroke-width="2.3" stroke-linecap="round" stroke-linejoin="round"/></svg>
<svg style="position:absolute;left:180px;top:1014px;" width="32" height="30" viewBox="0 0 32 30"><path d="M2.5 8 Q2.5 5 5 5 H11 L14 8 H25 Q27.5 8 27.5 10.5 V14 M14 26.5 H5 Q2.5 26.5 2.5 24 Z" fill="#393B40" stroke="#CED0D6" stroke-width="2.2"/><path d="M17 18 H30 M17 22.5 H30 M17 27 H30" stroke="#F2C55C" stroke-width="2.2"/></svg>
<div class="ui" style="position:absolute;left:217px;top:1010px;height:40px;line-height:40px;white-space:pre;">resources</div>
<svg style="position:absolute;left:218px;top:1062px;" width="32" height="32" viewBox="0 0 32 32"><path d="M3 25 C3 13 14 7 26 5 C27 14 25 22 15 25 C10 26 6 26 3 25 Z" fill="none" stroke="#5FA86A" stroke-width="2.2"/><circle cx="22" cy="23" r="6.5" fill="#27282A" stroke="#CED0D6" stroke-width="2"/><path d="M22 17.5 V23" stroke="#CED0D6" stroke-width="2" stroke-linecap="round"/></svg>
<div class="ui" style="position:absolute;left:255px;top:1058px;height:40px;line-height:40px;white-space:pre;color:#D6665B;">application.properties</div>
<svg style="position:absolute;left:104.0px;top:1119.0px;" width="20" height="12.0" viewBox="0 0 20 12.0"><path d="M2 2 L10.0 10.0 L18 2" fill="none" stroke="#B4B8BF" stroke-width="2.3" stroke-linecap="round" stroke-linejoin="round"/></svg>
<svg style="position:absolute;left:142px;top:1110px;" width="30" height="30" viewBox="0 0 30 30"><path d="M2.5 8 Q2.5 5 5 5 H11 L14 8 H25 Q27.5 8 27.5 10.5 V24 Q27.5 26.5 25 26.5 H5 Q2.5 26.5 2.5 24 Z" fill="#393B40" stroke="#CED0D6" stroke-width="2.2"/></svg>
<div class="ui" style="position:absolute;left:179px;top:1106px;height:40px;line-height:40px;white-space:pre;">test</div>
<svg style="position:absolute;left:142.0px;top:1167.0px;" width="20" height="12.0" viewBox="0 0 20 12.0"><path d="M2 2 L10.0 10.0 L18 2" fill="none" stroke="#B4B8BF" stroke-width="2.3" stroke-linecap="round" stroke-linejoin="round"/></svg>
<svg style="position:absolute;left:180px;top:1158px;" width="30" height="30" viewBox="0 0 30 30"><path d="M2.5 8 Q2.5 5 5 5 H11 L14 8 H25 Q27.5 8 27.5 10.5 V24 Q27.5 26.5 25 26.5 H5 Q2.5 26.5 2.5 24 Z" fill="#233227" stroke="#5FA86A" stroke-width="2.2"/></svg>
<div class="ui" style="position:absolute;left:217px;top:1154px;height:40px;line-height:40px;white-space:pre;">java</div>
<svg style="position:absolute;left:180.0px;top:1215.0px;" width="20" height="12.0" viewBox="0 0 20 12.0"><path d="M2 2 L10.0 10.0 L18 2" fill="none" stroke="#B4B8BF" stroke-width="2.3" stroke-linecap="round" stroke-linejoin="round"/></svg>
<svg style="position:absolute;left:218px;top:1206px;" width="30" height="30" viewBox="0 0 30 30"><path d="M2.5 8 Q2.5 5 5 5 H11 L14 8 H25 Q27.5 8 27.5 10.5 V24 Q27.5 26.5 25 26.5 H5 Q2.5 26.5 2.5 24 Z" fill="#393B40" stroke="#CED0D6" stroke-width="2.2"/><circle cx="10" cy="18" r="2.6" fill="none" stroke="#CED0D6" stroke-width="2"/></svg>
<div class="ui" style="position:absolute;left:255px;top:1202px;height:40px;line-height:40px;white-space:pre;">com.eve.staybooking</div>
<svg style="position:absolute;left:256px;top:1254px;" width="30" height="30" viewBox="0 0 30 30"><circle cx="15" cy="15" r="12.8" fill="#25324D" stroke="#548AF7" stroke-width="2.3"/><path d="M19.2 11.2 A5.6 5.6 0 1 0 19.2 18.8" fill="none" stroke="#548AF7" stroke-width="2"/></svg>
<div class="ui" style="position:absolute;left:293px;top:1250px;height:40px;line-height:40px;white-space:pre;color:#D6665B;">StaybookingApplicationTests</div>
<svg style="position:absolute;left:70.0px;top:1307.0px;" width="12.0" height="20" viewBox="0 0 12.0 20"><path d="M2 2 L10.0 10.0 L2 18" fill="none" stroke="#B4B8BF" stroke-width="2.3" stroke-linecap="round" stroke-linejoin="round"/></svg>
<svg style="position:absolute;left:104px;top:1302px;" width="30" height="30" viewBox="0 0 30 30"><path d="M2.5 8 Q2.5 5 5 5 H11 L14 8 H25 Q27.5 8 27.5 10.5 V24 Q27.5 26.5 25 26.5 H5 Q2.5 26.5 2.5 24 Z" fill="#3A2626" stroke="#E08855" stroke-width="2.2"/></svg>
<div class="ui" style="position:absolute;left:141px;top:1298px;height:40px;line-height:40px;white-space:pre;color:#8A8824;">target</div>
<svg style="position:absolute;left:104px;top:1350px;" width="30" height="30" viewBox="0 0 30 30"><circle cx="15" cy="15" r="12.5" fill="#393B40" stroke="#CED0D6" stroke-width="2.2"/><path d="M6.5 23.5 L23.5 6.5" stroke="#CED0D6" stroke-width="2.2"/></svg>
<div class="ui" style="position:absolute;left:141px;top:1346px;height:40px;line-height:40px;white-space:pre;color:#D6665B;">.gitignore</div>
<svg style="position:absolute;left:103px;top:1400px;" width="34" height="26" viewBox="0 0 34 26"><path d="M2 20 V6 H6 L9.5 13 L13 6 H17 V20 H13.5 V12 L9.5 19 L5.5 12 V20 Z" fill="#548AF7"/><path d="M25.5 5 V19 M20.5 14.5 L25.5 19.5 L30.5 14.5" fill="none" stroke="#548AF7" stroke-width="2.4"/></svg>
<div class="ui" style="position:absolute;left:141px;top:1394px;height:40px;line-height:40px;white-space:pre;color:#8A8824;">HELP.md</div>
<svg style="position:absolute;left:104px;top:1446px;" width="30" height="30" viewBox="0 0 30 30"><rect x="2.5" y="4.5" width="25" height="21" rx="3" fill="#393B40" stroke="#CED0D6" stroke-width="2.2"/><path d="M8 11 L12.5 14.5 L8 18 M15 20 H21" fill="none" stroke="#CED0D6" stroke-width="2.2"/></svg>
<div class="ui" style="position:absolute;left:141px;top:1442px;height:40px;line-height:40px;white-space:pre;color:#D6665B;">mvnw</div>
<svg style="position:absolute;left:103px;top:1493px;" width="34" height="32" viewBox="0 0 34 32"><path d="M14 3 H24 L30 9 V25 H14 Z" fill="#E9F0FB" stroke="#6B9BE0" stroke-width="1.5"/><path d="M17 12 H26 M17 16 H26 M17 20 H26" stroke="#4D7FD6" stroke-width="1.5"/><circle cx="11" cy="21" r="7" fill="#F0A830"/><circle cx="11" cy="21" r="2.5" fill="#6B4A10"/><path d="M11 11 V14 M11 28 V31 M1 21 H4 M18 21 H21 M4 14 L6 16 M16 26 L18 28 M4 28 L6 26 M16 16 L18 14" stroke="#F0A830" stroke-width="2.5"/></svg>
<div class="ui" style="position:absolute;left:145px;top:1490px;height:40px;line-height:40px;white-space:pre;color:#D6665B;">mvnw.cmd</div>
<div style="position:absolute;left:104px;top:1537px;height:40px;line-height:40px;white-space:pre;font-style:italic;font-size:38px;color:#548AF7;letter-spacing:-1px;">m</div>
<div class="ui" style="position:absolute;left:141px;top:1538px;height:40px;line-height:40px;white-space:pre;color:#D6665B;">pom.xml</div>
<svg style="position:absolute;left:30.0px;top:1599.0px;" width="20" height="12.0" viewBox="0 0 20 12.0"><path d="M2 2 L10.0 10.0 L18 2" fill="none" stroke="#B4B8BF" stroke-width="2.3" stroke-linecap="round" stroke-linejoin="round"/></svg>
<svg style="position:absolute;left:68px;top:1590px;" width="34" height="30" viewBox="0 0 34 30"><path d="M3 25 V10 M3 25 H29 M9 25 V7 Q9 5 11 5 H13 Q15 5 15 7 V25 M21 25 V13 Q21 11 23 11 H25 Q27 11 27 13 V25 M3 10 Q3 8 5 8 H9" fill="none" stroke="#CED0D6" stroke-width="2.2"/></svg>
<div class="ui" style="position:absolute;left:104px;top:1586px;height:40px;line-height:40px;white-space:pre;">External Libraries</div>
<svg style="position:absolute;left:70.0px;top:1643.0px;" width="12.0" height="20" viewBox="0 0 12.0 20"><path d="M2 2 L10.0 10.0 L2 18" fill="none" stroke="#B4B8BF" stroke-width="2.3" stroke-linecap="round" stroke-linejoin="round"/></svg>
<svg style="position:absolute;left:104px;top:1638px;" width="34" height="32" viewBox="0 0 34 32"><path d="M2.5 24 V8 Q2.5 5 5 5 H11 L14 8 H25 Q27.5 8 27.5 10.5 V14 H13 V26.5 H5 Q2.5 26.5 2.5 24 Z" fill="#393B40"/><path d="M12 26.5 H5 Q2.5 26.5 2.5 24 V8 Q2.5 5 5 5 H11 L14 8 H25 Q27.5 8 27.5 10.5 V13.5" fill="none" stroke="#CED0D6" stroke-width="2.2"/><path d="M15.5 18.5 H27 V23.5 Q27 29 21.2 29 Q15.5 29 15.5 23.5 Z M27 20.5 Q30.5 20.5 30.5 23 Q30.5 25.5 27 25.5" fill="none" stroke="#548AF7" stroke-width="2.2"/></svg>
<div class="ui" style="position:absolute;left:141px;top:1634px;height:40px;line-height:40px;white-space:pre;">&lt; openjdk-21 &gt;<span style="color:#868A91;">  /Users/eve/Library/Java/JavaVirtualMachines/openjdk-21/Contents/Home</span></div>
<svg style="position:absolute;left:70.0px;top:1691.0px;" width="12.0" height="20" viewBox="0 0 12.0 20"><path d="M2 2 L10.0 10.0 L2 18" fill="none" stroke="#B4B8BF" stroke-width="2.3" stroke-linecap="round" stroke-linejoin="round"/></svg>
<svg style="position:absolute;left:104px;top:1686px;" width="34" height="32" viewBox="0 0 34 32"><path d="M2.5 24 V8 Q2.5 5 5 5 H11 L14 8 H25 Q27.5 8 27.5 10.5 V14 H13 V26.5 H5 Q2.5 26.5 2.5 24 Z" fill="#393B40"/><path d="M12 26.5 H5 Q2.5 26.5 2.5 24 V8 Q2.5 5 5 5 H11 L14 8 H25 Q27.5 8 27.5 10.5 V13.5" fill="none" stroke="#CED0D6" stroke-width="2.2"/><path d="M15 29.5 V20.5 Q15 18.5 17 18.5 Q19 18.5 19 20.5 V29.5 M19 29.5 V16.5 Q19 14.5 21.2 14.5 Q23.4 14.5 23.4 16.5 V29.5 M23.4 29.5 V21 Q23.4 19 25.4 19 Q27.4 19 27.4 21 V29.5 H15" fill="none" stroke="#548AF7" stroke-width="2.1" stroke-linejoin="round"/></svg>
<div class="ui" style="position:absolute;left:141px;top:1682px;height:40px;line-height:40px;white-space:pre;">Maven: ch.qos.logback:logback-classic:1.5.6</div>
<svg style="position:absolute;left:70.0px;top:1739.0px;" width="12.0" height="20" viewBox="0 0 12.0 20"><path d="M2 2 L10.0 10.0 L2 18" fill="none" stroke="#B4B8BF" stroke-width="2.3" stroke-linecap="round" stroke-linejoin="round"/></svg>
<svg style="position:absolute;left:104px;top:1734px;" width="34" height="32" viewBox="0 0 34 32"><path d="M2.5 24 V8 Q2.5 5 5 5 H11 L14 8 H25 Q27.5 8 27.5 10.5 V14 H13 V26.5 H5 Q2.5 26.5 2.5 24 Z" fill="#393B40"/><path d="M12 26.5 H5 Q2.5 26.5 2.5 24 V8 Q2.5 5 5 5 H11 L14 8 H25 Q27.5 8 27.5 10.5 V13.5" fill="none" stroke="#CED0D6" stroke-width="2.2"/><path d="M15 29.5 V20.5 Q15 18.5 17 18.5 Q19 18.5 19 20.5 V29.5 M19 29.5 V16.5 Q19 14.5 21.2 14.5 Q23.4 14.5 23.4 16.5 V29.5 M23.4 29.5 V21 Q23.4 19 25.4 19 Q27.4 19 27.4 21 V29.5 H15" fill="none" stroke="#548AF7" stroke-width="2.1" stroke-linejoin="round"/></svg>
<div class="ui" style="position:absolute;left:141px;top:1730px;height:40px;line-height:40px;white-space:pre;">Maven: ch.qos.logback:logback-core:1.5.6</div>
<svg style="position:absolute;left:70.0px;top:1787.0px;" width="12.0" height="20" viewBox="0 0 12.0 20"><path d="M2 2 L10.0 10.0 L2 18" fill="none" stroke="#B4B8BF" stroke-width="2.3" stroke-linecap="round" stroke-linejoin="round"/></svg>
<svg style="position:absolute;left:104px;top:1782px;" width="34" height="32" viewBox="0 0 34 32"><path d="M2.5 24 V8 Q2.5 5 5 5 H11 L14 8 H25 Q27.5 8 27.5 10.5 V14 H13 V26.5 H5 Q2.5 26.5 2.5 24 Z" fill="#393B40"/><path d="M12 26.5 H5 Q2.5 26.5 2.5 24 V8 Q2.5 5 5 5 H11 L14 8 H25 Q27.5 8 27.5 10.5 V13.5" fill="none" stroke="#CED0D6" stroke-width="2.2"/><path d="M15 29.5 V20.5 Q15 18.5 17 18.5 Q19 18.5 19 20.5 V29.5 M19 29.5 V16.5 Q19 14.5 21.2 14.5 Q23.4 14.5 23.4 16.5 V29.5 M23.4 29.5 V21 Q23.4 19 25.4 19 Q27.4 19 27.4 21 V29.5 H15" fill="none" stroke="#548AF7" stroke-width="2.1" stroke-linejoin="round"/></svg>
<div class="ui" style="position:absolute;left:141px;top:1778px;height:40px;line-height:40px;white-space:pre;">Maven: com.fasterxml.jackson.core:jackson-annotations:2.17.1</div>
<svg style="position:absolute;left:70.0px;top:1835.0px;" width="12.0" height="20" viewBox="0 0 12.0 20"><path d="M2 2 L10.0 10.0 L2 18" fill="none" stroke="#B4B8BF" stroke-width="2.3" stroke-linecap="round" stroke-linejoin="round"/></svg>
<svg style="position:absolute;left:104px;top:1830px;" width="34" height="32" viewBox="0 0 34 32"><path d="M2.5 24 V8 Q2.5 5 5 5 H11 L14 8 H25 Q27.5 8 27.5 10.5 V14 H13 V26.5 H5 Q2.5 26.5 2.5 24 Z" fill="#393B40"/><path d="M12 26.5 H5 Q2.5 26.5 2.5 24 V8 Q2.5 5 5 5 H11 L14 8 H25 Q27.5 8 27.5 10.5 V13.5" fill="none" stroke="#CED0D6" stroke-width="2.2"/><path d="M15 29.5 V20.5 Q15 18.5 17 18.5 Q19 18.5 19 20.5 V29.5 M19 29.5 V16.5 Q19 14.5 21.2 14.5 Q23.4 14.5 23.4 16.5 V29.5 M23.4 29.5 V21 Q23.4 19 25.4 19 Q27.4 19 27.4 21 V29.5 H15" fill="none" stroke="#548AF7" stroke-width="2.1" stroke-linejoin="round"/></svg>
<div class="ui" style="position:absolute;left:141px;top:1826px;height:40px;line-height:40px;white-space:pre;">Maven: com.fasterxml.jackson.core:jackson-core:2.17.1</div>
<svg style="position:absolute;left:70.0px;top:1883.0px;" width="12.0" height="20" viewBox="0 0 12.0 20"><path d="M2 2 L10.0 10.0 L2 18" fill="none" stroke="#B4B8BF" stroke-width="2.3" stroke-linecap="round" stroke-linejoin="round"/></svg>
<svg style="position:absolute;left:104px;top:1878px;" width="34" height="32" viewBox="0 0 34 32"><path d="M2.5 24 V8 Q2.5 5 5 5 H11 L14 8 H25 Q27.5 8 27.5 10.5 V14 H13 V26.5 H5 Q2.5 26.5 2.5 24 Z" fill="#393B40"/><path d="M12 26.5 H5 Q2.5 26.5 2.5 24 V8 Q2.5 5 5 5 H11 L14 8 H25 Q27.5 8 27.5 10.5 V13.5" fill="none" stroke="#CED0D6" stroke-width="2.2"/><path d="M15 29.5 V20.5 Q15 18.5 17 18.5 Q19 18.5 19 20.5 V29.5 M19 29.5 V16.5 Q19 14.5 21.2 14.5 Q23.4 14.5 23.4 16.5 V29.5 M23.4 29.5 V21 Q23.4 19 25.4 19 Q27.4 19 27.4 21 V29.5 H15" fill="none" stroke="#548AF7" stroke-width="2.1" stroke-linejoin="round"/></svg>
<div class="ui" style="position:absolute;left:141px;top:1874px;height:40px;line-height:40px;white-space:pre;">Maven: com.fasterxml.jackson.core:jackson-databind:2.17.1</div>
<svg style="position:absolute;left:70.0px;top:1931.0px;" width="12.0" height="20" viewBox="0 0 12.0 20"><path d="M2 2 L10.0 10.0 L2 18" fill="none" stroke="#B4B8BF" stroke-width="2.3" stroke-linecap="round" stroke-linejoin="round"/></svg>
<svg style="position:absolute;left:104px;top:1926px;" width="34" height="32" viewBox="0 0 34 32"><path d="M2.5 24 V8 Q2.5 5 5 5 H11 L14 8 H25 Q27.5 8 27.5 10.5 V14 H13 V26.5 H5 Q2.5 26.5 2.5 24 Z" fill="#393B40"/><path d="M12 26.5 H5 Q2.5 26.5 2.5 24 V8 Q2.5 5 5 5 H11 L14 8 H25 Q27.5 8 27.5 10.5 V13.5" fill="none" stroke="#CED0D6" stroke-width="2.2"/><path d="M15 29.5 V20.5 Q15 18.5 17 18.5 Q19 18.5 19 20.5 V29.5 M19 29.5 V16.5 Q19 14.5 21.2 14.5 Q23.4 14.5 23.4 16.5 V29.5 M23.4 29.5 V21 Q23.4 19 25.4 19 Q27.4 19 27.4 21 V29.5 H15" fill="none" stroke="#548AF7" stroke-width="2.1" stroke-linejoin="round"/></svg>
<div class="ui" style="position:absolute;left:141px;top:1922px;height:40px;line-height:40px;white-space:pre;">Maven: com.fasterxml.jackson.datatype:jackson-datatype-jdk8:2.17.1</div>
<svg style="position:absolute;left:70.0px;top:1979.0px;" width="12.0" height="20" viewBox="0 0 12.0 20"><path d="M2 2 L10.0 10.0 L2 18" fill="none" stroke="#B4B8BF" stroke-width="2.3" stroke-linecap="round" stroke-linejoin="round"/></svg>
<svg style="position:absolute;left:104px;top:1974px;" width="34" height="32" viewBox="0 0 34 32"><path d="M2.5 24 V8 Q2.5 5 5 5 H11 L14 8 H25 Q27.5 8 27.5 10.5 V14 H13 V26.5 H5 Q2.5 26.5 2.5 24 Z" fill="#393B40"/><path d="M12 26.5 H5 Q2.5 26.5 2.5 24 V8 Q2.5 5 5 5 H11 L14 8 H25 Q27.5 8 27.5 10.5 V13.5" fill="none" stroke="#CED0D6" stroke-width="2.2"/><path d="M15 29.5 V20.5 Q15 18.5 17 18.5 Q19 18.5 19 20.5 V29.5 M19 29.5 V16.5 Q19 14.5 21.2 14.5 Q23.4 14.5 23.4 16.5 V29.5 M23.4 29.5 V21 Q23.4 19 25.4 19 Q27.4 19 27.4 21 V29.5 H15" fill="none" stroke="#548AF7" stroke-width="2.1" stroke-linejoin="round"/></svg>
<div class="ui" style="position:absolute;left:141px;top:1970px;height:40px;line-height:40px;white-space:pre;">Maven: com.fasterxml.jackson.datatype:jackson-datatype-jsr310:2.17.1</div>
<svg style="position:absolute;left:70.0px;top:2027.0px;" width="12.0" height="20" viewBox="0 0 12.0 20"><path d="M2 2 L10.0 10.0 L2 18" fill="none" stroke="#B4B8BF" stroke-width="2.3" stroke-linecap="round" stroke-linejoin="round"/></svg>
<svg style="position:absolute;left:104px;top:2022px;" width="34" height="32" viewBox="0 0 34 32"><path d="M2.5 24 V8 Q2.5 5 5 5 H11 L14 8 H25 Q27.5 8 27.5 10.5 V14 H13 V26.5 H5 Q2.5 26.5 2.5 24 Z" fill="#393B40"/><path d="M12 26.5 H5 Q2.5 26.5 2.5 24 V8 Q2.5 5 5 5 H11 L14 8 H25 Q27.5 8 27.5 10.5 V13.5" fill="none" stroke="#CED0D6" stroke-width="2.2"/><path d="M15 29.5 V20.5 Q15 18.5 17 18.5 Q19 18.5 19 20.5 V29.5 M19 29.5 V16.5 Q19 14.5 21.2 14.5 Q23.4 14.5 23.4 16.5 V29.5 M23.4 29.5 V21 Q23.4 19 25.4 19 Q27.4 19 27.4 21 V29.5 H15" fill="none" stroke="#548AF7" stroke-width="2.1" stroke-linejoin="round"/></svg>
<div class="ui" style="position:absolute;left:141px;top:2018px;height:40px;line-height:40px;white-space:pre;">Maven: com.fasterxml.jackson.module:jackson-module-parameter-names:2.17.1</div>
<svg style="position:absolute;left:70.0px;top:2075.0px;" width="12.0" height="20" viewBox="0 0 12.0 20"><path d="M2 2 L10.0 10.0 L2 18" fill="none" stroke="#B4B8BF" stroke-width="2.3" stroke-linecap="round" stroke-linejoin="round"/></svg>
<svg style="position:absolute;left:104px;top:2070px;" width="34" height="32" viewBox="0 0 34 32"><path d="M2.5 24 V8 Q2.5 5 5 5 H11 L14 8 H25 Q27.5 8 27.5 10.5 V14 H13 V26.5 H5 Q2.5 26.5 2.5 24 Z" fill="#393B40"/><path d="M12 26.5 H5 Q2.5 26.5 2.5 24 V8 Q2.5 5 5 5 H11 L14 8 H25 Q27.5 8 27.5 10.5 V13.5" fill="none" stroke="#CED0D6" stroke-width="2.2"/><path d="M15 29.5 V20.5 Q15 18.5 17 18.5 Q19 18.5 19 20.5 V29.5 M19 29.5 V16.5 Q19 14.5 21.2 14.5 Q23.4 14.5 23.4 16.5 V29.5 M23.4 29.5 V21 Q23.4 19 25.4 19 Q27.4 19 27.4 21 V29.5 H15" fill="none" stroke="#548AF7" stroke-width="2.1" stroke-linejoin="round"/></svg>
<div class="ui" style="position:absolute;left:141px;top:2066px;height:40px;line-height:40px;white-space:pre;">Maven: com.fasterxml:classmate:1.7.0</div>
<svg style="position:absolute;left:70.0px;top:2123.0px;" width="12.0" height="20" viewBox="0 0 12.0 20"><path d="M2 2 L10.0 10.0 L2 18" fill="none" stroke="#B4B8BF" stroke-width="2.3" stroke-linecap="round" stroke-linejoin="round"/></svg>
<svg style="position:absolute;left:104px;top:2118px;" width="34" height="32" viewBox="0 0 34 32"><path d="M2.5 24 V8 Q2.5 5 5 5 H11 L14 8 H25 Q27.5 8 27.5 10.5 V14 H13 V26.5 H5 Q2.5 26.5 2.5 24 Z" fill="#393B40"/><path d="M12 26.5 H5 Q2.5 26.5 2.5 24 V8 Q2.5 5 5 5 H11 L14 8 H25 Q27.5 8 27.5 10.5 V13.5" fill="none" stroke="#CED0D6" stroke-width="2.2"/><path d="M15 29.5 V20.5 Q15 18.5 17 18.5 Q19 18.5 19 20.5 V29.5 M19 29.5 V16.5 Q19 14.5 21.2 14.5 Q23.4 14.5 23.4 16.5 V29.5 M23.4 29.5 V21 Q23.4 19 25.4 19 Q27.4 19 27.4 21 V29.5 H15" fill="none" stroke="#548AF7" stroke-width="2.1" stroke-linejoin="round"/></svg>
<div class="ui" style="position:absolute;left:141px;top:2114px;height:40px;line-height:40px;white-space:pre;">Maven: com.google.protobuf:protobuf-java:3.6.1</div>
<svg style="position:absolute;left:70.0px;top:2171.0px;" width="12.0" height="20" viewBox="0 0 12.0 20"><path d="M2 2 L10.0 10.0 L2 18" fill="none" stroke="#B4B8BF" stroke-width="2.3" stroke-linecap="round" stroke-linejoin="round"/></svg>
<svg style="position:absolute;left:104px;top:2166px;" width="34" height="32" viewBox="0 0 34 32"><path d="M2.5 24 V8 Q2.5 5 5 5 H11 L14 8 H25 Q27.5 8 27.5 10.5 V14 H13 V26.5 H5 Q2.5 26.5 2.5 24 Z" fill="#393B40"/><path d="M12 26.5 H5 Q2.5 26.5 2.5 24 V8 Q2.5 5 5 5 H11 L14 8 H25 Q27.5 8 27.5 10.5 V13.5" fill="none" stroke="#CED0D6" stroke-width="2.2"/><path d="M15 29.5 V20.5 Q15 18.5 17 18.5 Q19 18.5 19 20.5 V29.5 M19 29.5 V16.5 Q19 14.5 21.2 14.5 Q23.4 14.5 23.4 16.5 V29.5 M23.4 29.5 V21 Q23.4 19 25.4 19 Q27.4 19 27.4 21 V29.5 H15" fill="none" stroke="#548AF7" stroke-width="2.1" stroke-linejoin="round"/></svg>
<div class="ui" style="position:absolute;left:141px;top:2162px;height:40px;line-height:40px;white-space:pre;">Maven: com.jayway.jsonpath:json-path:2.9.0</div>
<svg style="position:absolute;left:70.0px;top:2219.0px;" width="12.0" height="20" viewBox="0 0 12.0 20"><path d="M2 2 L10.0 10.0 L2 18" fill="none" stroke="#B4B8BF" stroke-width="2.3" stroke-linecap="round" stroke-linejoin="round"/></svg>
<svg style="position:absolute;left:104px;top:2214px;" width="34" height="32" viewBox="0 0 34 32"><path d="M2.5 24 V8 Q2.5 5 5 5 H11 L14 8 H25 Q27.5 8 27.5 10.5 V14 H13 V26.5 H5 Q2.5 26.5 2.5 24 Z" fill="#393B40"/><path d="M12 26.5 H5 Q2.5 26.5 2.5 24 V8 Q2.5 5 5 5 H11 L14 8 H25 Q27.5 8 27.5 10.5 V13.5" fill="none" stroke="#CED0D6" stroke-width="2.2"/><path d="M15 29.5 V20.5 Q15 18.5 17 18.5 Q19 18.5 19 20.5 V29.5 M19 29.5 V16.5 Q19 14.5 21.2 14.5 Q23.4 14.5 23.4 16.5 V29.5 M23.4 29.5 V21 Q23.4 19 25.4 19 Q27.4 19 27.4 21 V29.5 H15" fill="none" stroke="#548AF7" stroke-width="2.1" stroke-linejoin="round"/></svg>
<div class="ui" style="position:absolute;left:141px;top:2210px;height:40px;line-height:40px;white-space:pre;">Maven: com.jayway.jsonpath:json-smart:2.5.1</div>
</div>
<div style="position:absolute;left:1002px;top:157px;width:2429px;height:2302px;background:#1C1D1F;"></div>
<div style="position:absolute;left:1002px;top:237px;width:2429px;height:2px;background:#2A2B2E;"></div>
<svg style="position:absolute;left:1029px;top:182px;" width="30" height="30" viewBox="0 0 30 30"><circle cx="15" cy="15" r="12.8" fill="#25324D" stroke="#548AF7" stroke-width="2.3"/><path d="M19.2 11.2 A5.6 5.6 0 1 0 19.2 18.8" fill="none" stroke="#548AF7" stroke-width="2"/></svg>
<div class="ui" style="position:absolute;left:1071px;top:180px;height:40px;line-height:40px;white-space:pre;color:#5B9652;">JwtUtil.java</div>
<svg style="position:absolute;left:1299px;top:182px;" width="30" height="30" viewBox="0 0 30 30"><circle cx="15" cy="15" r="12.8" fill="#25324D" stroke="#548AF7" stroke-width="2.3"/><path d="M19.2 11.2 A5.6 5.6 0 1 0 19.2 18.8" fill="none" stroke="#548AF7" stroke-width="2"/></svg>
<div class="ui" style="position:absolute;left:1341px;top:180px;height:40px;line-height:40px;white-space:pre;color:#5B9652;">AuthenticationService.java</div>
<svg style="position:absolute;left:1753px;top:182px;" width="30" height="30" viewBox="0 0 30 30"><circle cx="15" cy="15" r="12.8" fill="#25324D" stroke="#548AF7" stroke-width="2.3"/><path d="M19.2 11.2 A5.6 5.6 0 1 0 19.2 18.8" fill="none" stroke="#548AF7" stroke-width="2"/></svg>
<div class="ui" style="position:absolute;left:1794px;top:180px;height:40px;line-height:40px;white-space:pre;color:#5B9652;">UserNotExistException.java</div>
<svg style="position:absolute;left:2219px;top:182px;" width="30" height="30" viewBox="0 0 30 30"><circle cx="15" cy="15" r="12.8" fill="#25324D" stroke="#548AF7" stroke-width="2.3"/><path d="M19.2 11.2 A5.6 5.6 0 1 0 19.2 18.8" fill="none" stroke="#548AF7" stroke-width="2"/></svg>
<div class="ui" style="position:absolute;left:2260px;top:180px;height:40px;line-height:40px;white-space:pre;color:#5B9652;">UserAlreadyExistException.java</div>
<svg style="position:absolute;left:1688px;top:187px;" width="22" height="22" viewBox="0 0 22 22"><path d="M3 3 L19 19 M19 3 L3 19" fill="none" stroke="#9DA0A8" stroke-width="2.2" stroke-linecap="round" stroke-linejoin="round"/></svg>
<div style="position:absolute;left:1274px;top:234px;width:456px;height:6px;border-radius:3px;background:#3574F0;"></div>
<div style="position:absolute;left:2735px;top:177px;height:40px;line-height:40px;white-space:pre;font-style:italic;font-size:38px;color:#548AF7;letter-spacing:-1px;">m</div>
<div class="ui" style="position:absolute;left:2777px;top:180px;height:40px;line-height:40px;white-space:pre;color:#D6665B;">pom.xml (staybooking)</div>
<svg style="position:absolute;left:3143px;top:182px;" width="32" height="32" viewBox="0 0 32 32"><path d="M3 25 C3 13 14 7 26 5 C27 14 25 22 15 25 C10 26 6 26 3 25 Z" fill="none" stroke="#5FA86A" stroke-width="2.2"/><circle cx="22" cy="23" r="6.5" fill="#27282A" stroke="#CED0D6" stroke-width="2"/><path d="M22 17.5 V23" stroke="#CED0D6" stroke-width="2" stroke-linecap="round"/></svg>
<div class="ui" style="position:absolute;left:3185px;top:180px;height:40px;line-height:40px;white-space:pre;color:#D6665B;-webkit-mask-image:linear-gradient(90deg,#000 75%,transparent 100%);width:120px;overflow:hidden;">applicatio</div>
<svg style="position:absolute;left:3328.0px;top:190.0px;" width="24" height="14.0" viewBox="0 0 24 14.0"><path d="M2 2 L12.0 12.0 L22 2" fill="none" stroke="#CED0D6" stroke-width="2.4" stroke-linecap="round" stroke-linejoin="round"/></svg>
<div style="position:absolute;left:3389px;top:184.5px;width:5px;height:5.0px;border-radius:50%;background:#CED0D6;"></div>
<div style="position:absolute;left:3389px;top:194.5px;width:5px;height:5.0px;border-radius:50%;background:#CED0D6;"></div>
<div style="position:absolute;left:3389px;top:204.5px;width:5px;height:5.0px;border-radius:50%;background:#CED0D6;"></div>
<div style="position:absolute;left:1004px;top:1296px;width:2404px;height:44px;background:#232428;"></div>
<div style="position:absolute;left:1150px;top:239px;width:2px;height:2220px;background:#28292C;"></div>
<div style="position:absolute;left:3028px;top:239px;width:2px;height:2220px;background:#2E3033;"></div>
<div style="position:absolute;left:1214px;top:1340px;width:2px;height:88px;background:#2F3135;"></div>
<div style="position:absolute;left:1214px;top:1604px;width:2px;height:572px;background:#2F3135;"></div>
<div style="position:absolute;left:1277px;top:1692px;width:2px;height:44px;background:#2F3135;"></div>
<div style="position:absolute;left:1277px;top:1780px;width:2px;height:88px;background:#2F3135;"></div>
<div style="position:absolute;left:1277px;top:2000px;width:2px;height:44px;background:#2F3135;"></div>
<div class="ln" style="top:243px;">1</div>
<div class="cr" style="top:243px;"><span class="k">package</span> com.eve.staybooking.service;</div>
<div class="ln" style="top:287px;">2</div>
<div class="cr" style="top:287px;"></div>
<div class="ln" style="top:331px;">3</div>
<div class="cr" style="top:331px;"><span class="k">import</span> com.eve.staybooking.exception.UserNotExistException;</div>
<div class="ln" style="top:375px;">4</div>
<div class="cr" style="top:375px;"><span class="k">import</span> com.eve.staybooking.model.Token;</div>
<div class="ln" style="top:419px;">5</div>
<div class="cr" style="top:419px;"><span class="k">import</span> com.eve.staybooking.model.User;</div>
<div class="ln" style="top:463px;">6</div>
<div class="cr" style="top:463px;"><span class="k">import</span> com.eve.staybooking.model.UserRole;</div>
<div class="ln" style="top:507px;">7</div>
<div class="cr" style="top:507px;"><span class="k">import</span> com.eve.staybooking.util.JwtUtil;</div>
<div class="ln" style="top:551px;">8</div>
<div class="cr" style="top:551px;"><span class="k">import</span> org.springframework.beans.factory.annotation.<span class="a">Autowired</span>;</div>
<div class="ln" style="top:595px;">9</div>
<div class="cr" style="top:595px;"><span class="k">import</span> org.springframework.security.authentication.<span class="hl">AuthenticationManager</span>;</div>
<div class="ln" style="top:639px;">10</div>
<div class="cr" style="top:639px;"><span class="k">import</span> org.springframework.security.authentication.UsernamePasswordAuthenticationToken;</div>
<div class="ln" style="top:683px;">11</div>
<div class="cr" style="top:683px;"><span class="k">import</span> org.springframework.security.core.Authentication;</div>
<div class="ln" style="top:727px;">12</div>
<div class="cr" style="top:727px;"><span class="k">import</span> org.springframework.security.core.authority.SimpleGrantedAuthority;</div>
<div class="ln" style="top:771px;">13</div>
<div class="cr" style="top:771px;"><span class="k">import</span> org.springframework.stereotype.<span class="a">Service</span>;</div>
<div class="ln" style="top:815px;">14</div>
<div class="cr" style="top:815px;"></div>
<div class="hint" style="left:1157.0px;top:858px;">no usages&nbsp;&nbsp;&nbsp;&nbsp;new *</div>
<div class="ln" style="top:903px;">15</div>
<div class="cr" style="top:903px;"><span class="a">@Service</span></div>
<div class="ln" style="top:947px;">16</div>
<div class="cr" style="top:947px;"><span class="k">public class</span> AuthenticationService {</div>
<div class="hint" style="left:1219.4px;top:990px;">2 usages</div>
<div class="ln" style="top:1035px;">17</div>
<div class="cr" style="top:1035px;">    <span class="k">private</span> <span class="hl">AuthenticationManager</span> <span class="f wv">authenticationManager</span>;</div>
<div class="hint" style="left:1219.4px;top:1078px;">2 usages</div>
<div class="ln" style="top:1123px;">18</div>
<div class="cr" style="top:1123px;">    <span class="k">private</span> JwtUtil <span class="f wv">jwtUtil</span>;</div>
<div class="ln" style="top:1167px;">19</div>
<div class="cr" style="top:1167px;"></div>
<div class="hint" style="left:1219.4px;top:1210px;">new *</div>
<div class="ln" style="top:1255px;">20</div>
<div class="cr" style="top:1255px;">    <span class="a">@Autowired</span></div>
<div class="ln" style="top:1299px;color:#A1A3AB;">21</div>
<div class="cr" style="top:1299px;">    <span class="k">public</span> <span class="m">AuthenticationService</span>(<span class="hl">AuthenticationManager</span> authenticationManager, JwtUtil jwtUtil) {</div>
<div class="ln" style="top:1343px;">22</div>
<div class="cr" style="top:1343px;">        <span class="k">this</span>.<span class="f">authenticationManager</span> = authenticationManager;</div>
<div class="ln" style="top:1387px;">23</div>
<div class="cr" style="top:1387px;">        <span class="k">this</span>.<span class="f">jwtUtil</span> = jwtUtil;</div>
<div class="ln" style="top:1431px;">24</div>
<div class="cr" style="top:1431px;">    }</div>
<div class="ln" style="top:1475px;">25</div>
<div class="cr" style="top:1475px;"></div>
<div class="hint" style="left:1219.4px;top:1518px;">no usages&nbsp;&nbsp;&nbsp;&nbsp;new *</div>
<div class="ln" style="top:1563px;">26</div>
<div class="cr" style="top:1563px;">    <span class="k">public</span> Token <span class="g">authenticate</span>(User user, UserRole role) <span class="k">throws</span> UserNotExistException {</div>
<div class="ln" style="top:1607px;">27</div>
<div class="cr" style="top:1607px;">        Authentication <span class="ul">auth</span> = <span class="g">null</span>;</div>
<div class="ln" style="top:1651px;">28</div>
<div class="cr" style="top:1651px;">        <span class="k">try</span> {</div>
<div class="ln" style="top:1695px;">29</div>
<div class="cr" style="top:1695px;">            <span class="ul">auth</span> = <span class="f">authenticationManager</span>.authenticate(<span class="k">new</span> UsernamePasswordAuthenticationToken(user.getUsername(), user.getPassword()));</div>
<div class="ln" style="top:1739px;">30</div>
<div class="cr" style="top:1739px;">        } <span class="k">catch</span> (Exception e) {</div>
<div class="ln" style="top:1783px;">31</div>
<div class="cr" style="top:1783px;">            <span class="k">throw new</span> UserNotExistException(<span class="s">"User does not exist"</span>);</div>
<div class="ln" style="top:1827px;">32</div>
<div class="cr" style="top:1827px;"></div>
<div class="ln" style="top:1871px;">33</div>
<div class="cr" style="top:1871px;">        }</div>
<div class="ln" style="top:1915px;">34</div>
<div class="cr" style="top:1915px;"></div>
<div class="ln" style="top:1959px;">35</div>
<div class="cr" style="top:1959px;">        <span class="k">if</span> (<span class="ul">auth</span> == <span class="k">null</span> || !<span class="ul">auth</span>.isAuthenticated() || !<span class="ul">auth</span>.getAuthorities().contains(<span class="k">new</span> SimpleGrantedAuthority(role.name()))) {</div>
<div class="ln" style="top:2003px;">36</div>
<div class="cr" style="top:2003px;">            <span class="k">throw new</span> UserNotExistException(<span class="s">"User Doesn't Exist"</span>);</div>
<div class="ln" style="top:2047px;">37</div>
<div class="cr" style="top:2047px;">        }</div>
<div class="ln" style="top:2091px;">38</div>
<div class="cr" style="top:2091px;">        <span class="k">return new</span> Token(<span class="f">jwtUtil</span>.generateToken(user.getUsername()));</div>
<div class="ln" style="top:2135px;">39</div>
<div class="cr" style="top:2135px;"></div>
<div class="ln" style="top:2179px;">40</div>
<div class="cr" style="top:2179px;">    }</div>
<div class="ln" style="top:2223px;">41</div>
<div class="cr" style="top:2223px;">}</div>
<div class="ln" style="top:2267px;">42</div>
<div class="cr" style="top:2267px;"></div>
<svg style="position:absolute;left:1076px;top:951px;" width="32" height="32" viewBox="0 0 32 32"><circle cx="15" cy="15" r="12.5" fill="#233227" stroke="#5FA86A" stroke-width="2.3"/><path d="M6.5 6.5 L23.5 23.5" stroke="#5FA86A" stroke-width="2.2"/><path d="M31 23 V31 H23 Z" fill="#DFE1E5"/></svg>
<svg style="position:absolute;left:1076px;top:1303px;" width="32" height="32" viewBox="0 0 32 32"><circle cx="15" cy="15" r="12.5" fill="#233227" stroke="#5FA86A" stroke-width="2.3"/><path d="M6.5 6.5 L23.5 23.5" stroke="#5FA86A" stroke-width="2.2"/><path d="M10 19.5 H22 M18 15 L22.5 19.5 L18 24" fill="none" stroke="#DFE1E5" stroke-width="2.2"/><path d="M31 23 V31 H23 Z" fill="#DFE1E5"/></svg>
<svg style="position:absolute;left:1172px;top:1252px;" width="24" height="32" viewBox="0 0 24 32"><path d="M12 1 C5 1 1 6 1 11 C1 15 4 18 6 20 V23 H18 V20 C20 18 23 15 23 11 C23 6 19 1 12 1 Z" fill="#F2C55C"/><path d="M7 26 H17 M8 30 H16" stroke="#DFE1E5" stroke-width="2.2"/></svg>
<svg style="position:absolute;left:3290px;top:253px;" width="25" height="24" viewBox="0 0 25 24"><path d="M12.5 1.5 L23.5 21.5 H1.5 Z" fill="#D3A049" stroke="#D3A049" stroke-width="2" stroke-linejoin="round"/><path d="M12.5 7.5 V14.5" stroke="#1C1D1F" stroke-width="2.8"/><circle cx="12.5" cy="18.3" r="1.6" fill="#1C1D1F"/></svg>
<div class="ui" style="position:absolute;left:3320px;top:246px;height:40px;line-height:40px;white-space:pre;color:#A8ABB0;font-size:26px;">4</div>
<svg style="position:absolute;left:3354px;top:258px;" width="22" height="14" viewBox="0 0 22 14"><path d="M2 11 L11 3 L20 11" fill="none" stroke="#A8ABB0" stroke-width="2.2" stroke-linecap="round" stroke-linejoin="round"/></svg>
<svg style="position:absolute;left:3395px;top:258px;" width="22" height="14" viewBox="0 0 22 14"><path d="M2 3 L11 11 L20 3" fill="none" stroke="#A8ABB0" stroke-width="2.2" stroke-linecap="round" stroke-linejoin="round"/></svg>
<div style="position:absolute;left:3410px;top:296px;width:14px;height:2094px;border-radius:7px;background:#36383C;"></div>
<div style="position:absolute;left:3402px;top:623px;width:28px;height:4px;background:#5E7A6C;"></div>
<div style="position:absolute;left:3402px;top:1041px;width:28px;height:4px;background:#5E7A6C;"></div>
<div style="position:absolute;left:3402px;top:1123px;width:28px;height:4px;background:#C9A45A;"></div>
<div style="position:absolute;left:3402px;top:1291px;width:28px;height:4px;background:#5E7A6C;"></div>
<div style="position:absolute;left:3402px;top:1541px;width:28px;height:4px;background:#C9A45A;"></div>
</div>
<div style="position:absolute;left:112px;top:76px;width:3399px;height:2443px;border-radius:20px;box-shadow:inset 0 0 0 2px rgba(255,255,255,0.3);pointer-events:none;"></div>
</body></html>
